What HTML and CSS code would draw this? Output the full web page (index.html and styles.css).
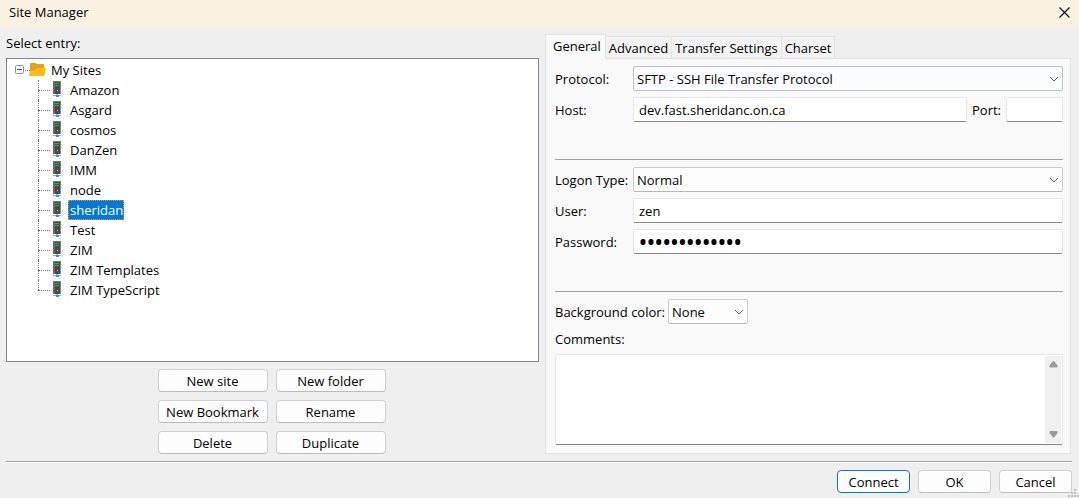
FILE: index.html
```html
<!DOCTYPE html>
<html lang="en">
<head>
<meta charset="utf-8">
<title>Site Manager</title>
<link rel="stylesheet" href="styles.css">
</head>
<body>
<svg class="sprites" aria-hidden="true">
  <symbol id="server" viewBox="0 0 10 16">
    <path d="M1 0H9V13H1Z" fill="#4a4a4a"/>
    <path d="M1 0H3V13H1Z" fill="#686868"/>
    <path d="M8 0H9V13H8Z" fill="#858585"/>
    <path d="M1 0H9V1H1Z" fill="#777"/>
    <path d="M3 2H7V3H3ZM3 4H7V5H3Z" fill="#2fae2f"/>
    <path d="M5 9H6V10H5Z" fill="#ccc"/>
    <path d="M4 13H6V14H4Z" fill="#9ab4c8"/>
    <path d="M1 14H9V15H1Z" fill="#a5a5a5"/>
    <path d="M4 14H7V16H4Z" fill="#4a91d0"/>
  </symbol>
  <symbol id="chevron" viewBox="0 0 10 6">
    <path d="M1 1L5 5L9 1" fill="none" stroke="#555" stroke-width="1"/>
  </symbol>
</svg>
<div class="dialog">
  <header class="titlebar">
    <h1 class="title">Site Manager</h1>
    <button class="close" type="button" aria-label="Close">
      <svg width="11" height="11" viewBox="0 0 11 11"><path d="M.5 .5L10.500 10.500M10.500 .5L.5 10.500" stroke="#111" stroke-width="1.200"/></svg>
    </button>
  </header>
  <main class="content">
    <section class="entries">
      <h2 class="entries-label" id="entries-label">Select entry:</h2>
      <div class="tree" aria-labelledby="entries-label">
        <div class="tree-root">
          <svg width="10" height="10" viewBox="0 0 10 10"><rect x=".5" y=".5" width="8" height="8" rx="1" fill="#f8f8f8" stroke="#919191"/><path d="M2 4.500H7" stroke="#3b58a8"/></svg>
          <span class="stub"></span>
          <svg class="folder" width="17" height="14" viewBox="0 0 17 14"><path d="M1 1Q1 0 2 0H6L8 1H14Q15 1 15 2V12H1Z" fill="#dfa21a"/><path d="M1 13Q0 13 0 12L1 8Q6 8 8 5.500Q8.500 5 9 5H16Q17 5 16.800 6L15.500 12Q15 13 14 13Z" fill="#fdbc12"/></svg>
          <span>My Sites</span>
        </div>
        <ul class="sites">
          <li><svg class="server"><use href="#server"/></svg><span class="name">Amazon</span></li>
          <li><svg class="server"><use href="#server"/></svg><span class="name">Asgard</span></li>
          <li><svg class="server"><use href="#server"/></svg><span class="name">cosmos</span></li>
          <li><svg class="server"><use href="#server"/></svg><span class="name">DanZen</span></li>
          <li><svg class="server"><use href="#server"/></svg><span class="name">IMM</span></li>
          <li><svg class="server"><use href="#server"/></svg><span class="name">node</span></li>
          <li><svg class="server"><use href="#server"/></svg><span class="name selected">sheridan</span></li>
          <li><svg class="server"><use href="#server"/></svg><span class="name">Test</span></li>
          <li><svg class="server"><use href="#server"/></svg><span class="name">ZIM</span></li>
          <li><svg class="server"><use href="#server"/></svg><span class="name">ZIM Templates</span></li>
          <li><svg class="server"><use href="#server"/></svg><span class="name">ZIM TypeScript</span></li>
        </ul>
      </div>
      <div class="entry-actions">
        <button class="btn" type="button">New site</button>
        <button class="btn" type="button">New folder</button>
        <button class="btn" type="button">New Bookmark</button>
        <button class="btn" type="button">Rename</button>
        <button class="btn" type="button">Delete</button>
        <button class="btn" type="button">Duplicate</button>
      </div>
    </section>
    <section class="settings">
      <div class="tabs" role="tablist">
        <button class="tab active" type="button" role="tab" aria-selected="true">General</button>
        <button class="tab" type="button" role="tab">Advanced</button>
        <button class="tab" type="button" role="tab">Transfer Settings</button>
        <button class="tab" type="button" role="tab">Charset</button>
      </div>
      <form class="panel">
        <div class="group">
          <div class="row">
            <label class="label" for="protocol">Protocol:</label>
            <div class="select-wrap hot">
              <select id="protocol"><option>SFTP - SSH File Transfer Protocol</option></select>
              <svg class="chevron"><use href="#chevron"/></svg>
            </div>
          </div>
          <div class="row">
            <label class="label" for="host">Host:</label>
            <input class="field" id="host" type="text" value="dev.fast.sheridanc.on.ca">
            <label class="port-label" for="port">Port:</label>
            <input class="field port" id="port" type="text">
          </div>
        </div>
        <hr class="rule">
        <div class="group">
          <div class="row">
            <label class="label" for="logon">Logon Type:</label>
            <div class="select-wrap">
              <select id="logon"><option>Normal</option></select>
              <svg class="chevron"><use href="#chevron"/></svg>
            </div>
          </div>
          <div class="row">
            <label class="label" for="user">User:</label>
            <input class="field" id="user" type="text" value="zen">
          </div>
          <div class="row">
            <label class="label" for="password">Password:</label>
            <input class="field secret" id="password" type="password" value="xxxxxxxxxxxxx">
          </div>
        </div>
        <hr class="rule">
        <div class="row">
          <label class="color-label" for="color">Background color:</label>
          <div class="select-wrap small">
            <select id="color"><option>None</option></select>
            <svg class="chevron"><use href="#chevron"/></svg>
          </div>
        </div>
        <label class="comments-label" for="comments">Comments:</label>
        <div class="comments">
          <textarea id="comments"></textarea>
          <div class="scrollbar">
            <svg width="9" height="7" viewBox="0 0 9 7"><path d="M3.500 .5Q4.500 -.5 5.500 .5L8.500 4.500Q9 6.500 7.500 6.500H1.500Q0 6.500 .5 4.500Z" fill="#9b9b9b"/></svg>
            <svg width="9" height="7" viewBox="0 0 9 7"><path d="M3.500 6Q4.500 7 5.500 6L8.500 2Q9 0 7.500 0H1.500Q0 0 .5 2Z" fill="#9b9b9b"/></svg>
          </div>
        </div>
      </form>
    </section>
  </main>
  <footer class="footer">
    <button class="btn primary" type="button">Connect</button>
    <button class="btn" type="button">OK</button>
    <button class="btn" type="button">Cancel</button>
  </footer>
  <svg class="grip" width="11" height="9" viewBox="0 0 11 9"><path d="M6 0h2v2h-2zM3 3h2v2h-2zM6 3h2v2h-2zM0 6h2v2h-2zM3 6h2v2h-2zM6 6h2v2h-2zM9 6h2v2h-2z" fill="#bdbdbd"/></svg>
</div>
</body>
</html>
```
FILE: styles.css
```css
* { box-sizing: border-box; }

body {
  margin: 0;
  background: #efefef;
  color: #000;
  font: 13px/20px "Open Sans", "Noto Sans", sans-serif;
}

button, input, select, textarea { font: inherit; color: inherit; }

.sprites { display: none; }

.dialog {
  position: relative;
  display: flex;
  flex-direction: column;
  min-height: 100vh;
}

.titlebar {
  display: flex;
  align-items: center;
  justify-content: space-between;
  height: 28px;
  padding: 0 9px 4px;
  background: #f9f2e3;
}

.title { margin: 0; font-size: 13px; font-weight: 400; }

.close {
  display: flex;
  padding: 0;
  border: 0;
  background: none;
}

.content {
  flex: 1;
  display: flex;
  gap: 6px;
  padding: 0 8px 7px 6px;
}

.entries { flex: 533 1 0; display: flex; flex-direction: column; }

.entries-label { margin: 5px 0; font-size: 13px; font-weight: 400; }

.tree {
  flex: 1;
  padding: 1px 8px;
  border: 1px solid #828790;
  background: #fff;
}

.tree-root { display: flex; align-items: center; height: 20px; }

.stub { width: 5px; margin-right: -1px; border-top: 1px dotted #777; }

.folder { margin-right: 5px; }

.sites { margin: 0 0 0 23px; padding: 0; list-style: none; }

.sites li {
  position: relative;
  display: flex;
  align-items: center;
  height: 20px;
  padding-left: 14px;
}

.sites li::before {
  content: "";
  position: absolute;
  top: 0;
  left: 0;
  height: 20px;
  border-left: 1px dotted #777;
}

.sites li:last-child::before { height: 10px; }

.sites li::after {
  content: "";
  position: absolute;
  top: 10px;
  left: 0;
  width: 12px;
  border-top: 1px dotted #777;
}

.server { width: 10px; height: 16px; margin-bottom: 2px; }

.name { margin-left: 6px; padding: 0 2px; }

.selected {
  padding-right: 1px;
  background: #0078d7;
  color: #fff;
  outline: 1px dotted #ff8728;
  outline-offset: -1px;
}

.entry-actions {
  display: grid;
  grid-template-columns: 110px 110px;
  justify-content: center;
  gap: 8px;
  margin-top: 7px;
  padding-right: 2px;
}

.btn {
  height: 23px;
  padding: 0;
  border: 1px solid #d0d0d0;
  border-bottom-color: #bcbcbc;
  border-radius: 4px;
  background: #fdfdfd;
}

.primary { border-color: #0078d4; }

.settings { flex: 526 1 0; display: flex; flex-direction: column; padding-top: 6px; }

.tabs { display: flex; align-items: flex-end; height: 24px; }

.tab {
  height: 22px;
  padding: 0 3px;
  border: 1px solid #e3e3e3;
  border-width: 1px 1px 0 0;
  background: #f2f2f2;
}

.tab.active {
  z-index: 1;
  height: 25px;
  margin-bottom: -1px;
  padding: 0 4px 2px 7px;
  border-left-width: 1px;
  background: #f9f9f9;
}

.panel {
  flex: 1;
  display: flex;
  flex-direction: column;
  padding: 7px 7px 8px 9px;
  border: 1px solid #e3e3e3;
  background: #f9f9f9;
}

.group { display: flex; flex-direction: column; gap: 6px; }

.row { display: flex; align-items: center; height: 25px; }

.label { width: 78px; }

.select-wrap { position: relative; flex: 1; display: flex; }

.select-wrap.small { flex: none; width: 80px; }

select {
  appearance: none;
  width: 100%;
  height: 25px;
  padding: 1px 24px 0 3px;
  border: 1px solid #cbcbcb;
  border-bottom-color: #b8b8b8;
  border-radius: 2px;
  background: #fdfdfd;
}

.hot select { border-color: #b9c0c8; background: #fafcff; }

.chevron {
  position: absolute;
  top: 10px;
  right: 4px;
  width: 10px;
  height: 6px;
  pointer-events: none;
}

.field {
  flex: 1;
  min-width: 0;
  height: 25px;
  padding: 0 5px;
  border: 1px solid #e8e8e8;
  border-bottom-color: #868686;
  border-radius: 2px;
  background: #fff;
}

.secret { font-size: 21px; font-weight: 600; }

.port-label { margin: 0 5px; }

.port { flex: none; width: 57px; }

.rule {
  width: 100%;
  margin: 37px 0 7px;
  border: 0;
  border-top: 1px solid #a0a0a0;
}

.color-label { margin-right: 3px; }

.comments-label { margin: 5px 0; }

.comments {
  flex: 1;
  display: flex;
  min-height: 60px;
  padding: 1px;
  border: 1px solid #e8e8e8;
  border-bottom-color: #868686;
  border-radius: 2px;
  background: #fff;
}

textarea { flex: 1; border: 0; padding: 2px 4px; resize: none; background: none; }

.scrollbar {
  display: flex;
  flex-direction: column;
  align-items: center;
  justify-content: space-between;
  width: 16px;
  padding: 5px 0;
  background: #f0f0f0;
}

.footer {
  display: flex;
  justify-content: flex-end;
  gap: 8px;
  margin: 0 7px 0 6px;
  padding: 8px 0 5px;
  border-top: 1px solid #a0a0a0;
  box-shadow: inset 0 1px #fff;
}

.footer .btn { width: 73px; }

.grip { position: absolute; right: 0; bottom: 0; }
```
